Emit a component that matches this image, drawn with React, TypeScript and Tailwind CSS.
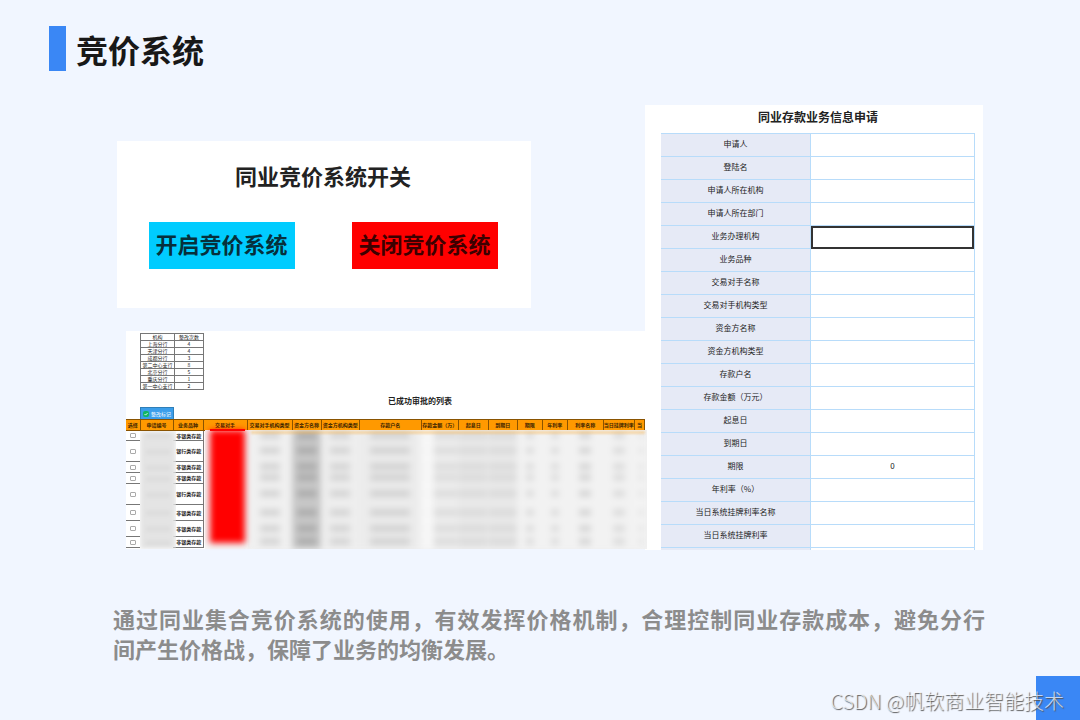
import React from 'react';
import { clsx } from 'clsx';

const branches = [
  { name: '上海分行', count: 4 },
  { name: '天津分行', count: 4 },
  { name: '成都分行', count: 3 },
  { name: '第二中心支行', count: 8 },
  { name: '北京分行', count: 5 },
  { name: '重庆分行', count: 1 },
  { name: '第一中心支行', count: 2 },
];

const columns = [
  { title: '选择', width: 'w-[14px]' },
  { title: '申请编号', width: 'w-[33px]' },
  { title: '业务品种', width: 'w-[30px]' },
  { title: '交易对手', width: 'w-[44px]' },
  { title: '交易对手机构类型', width: 'w-[45px]' },
  { title: '资金方名称', width: 'w-[29px]' },
  { title: '资金方机构类型', width: 'w-[38px]' },
  { title: '存款户名', width: 'w-[62px]' },
  { title: '存款金额（万）', width: 'w-[37px]' },
  { title: '起息日', width: 'w-[30px]' },
  { title: '到期日', width: 'w-[29px]' },
  { title: '期限', width: 'w-[25px]' },
  { title: '年利率', width: 'w-[25px]' },
  { title: '利率名称', width: 'w-[36px]' },
  { title: '当日挂牌利率', width: 'w-[31px]' },
  { title: '当', width: 'w-[10px]' },
];

const deposits = [
  { type: '非银类存款', height: 'h-[10px]' },
  { type: '银行类存款', height: 'h-[21px]' },
  { type: '非银类存款', height: 'h-[11px]' },
  { type: '非银类存款', height: 'h-[11px]' },
  { type: '银行类存款', height: 'h-[21px]' },
  { type: '非银类存款', height: 'h-4' },
  { type: '非银类存款', height: 'h-4' },
  { type: '非银类存款', height: 'h-[11px]' },
];

// masked columns, from 交易对手机构类型 onwards
const masks = [
  { width: 'w-[44px]', bar: 'w-5 bg-[#d4d4d4]', base: 'bg-[#f0f0f0]' },
  { width: 'w-[29px]', bar: 'w-5 bg-[#acacac]', base: 'bg-[#c8c8c8]' },
  { width: 'w-[38px]', bar: 'w-5 bg-[#d4d4d4]', base: 'bg-[#eeeeee]' },
  { width: 'w-[62px]', bar: 'w-10 bg-[#d2d2d2]', base: 'bg-[#ececec]' },
  { width: 'w-[12px]', bar: 'w-1 bg-[#f4f4f4]', base: 'bg-[#f8f8f8]' },
  { width: 'w-[25px]', bar: 'w-6 bg-[#dcdcdc]', base: 'bg-[#ededed]' },
  { width: 'w-[30px]', bar: 'w-7 bg-[#dadada]', base: 'bg-[#e9e9e9]' },
  { width: 'w-[29px]', bar: 'w-7 bg-[#dadada]', base: 'bg-[#e9e9e9]' },
  { width: 'w-[25px]', bar: 'w-2 bg-[#dcdcdc]', base: 'bg-[#f2f2f2]' },
  { width: 'w-[25px]', bar: 'w-2 bg-[#dcdcdc]', base: 'bg-[#f2f2f2]' },
  { width: 'w-[36px]', bar: 'w-3 bg-[#d6d6d6]', base: 'bg-[#f2f2f2]' },
  { width: 'w-[31px]', bar: 'w-3 bg-[#dcdcdc]', base: 'bg-[#f2f2f2]' },
  { width: 'flex-1', bar: 'w-1 bg-[#e2e2e2]', base: 'bg-[#f3f3f3]' },
];

const fields = [
  { label: '申请人' },
  { label: '登陆名' },
  { label: '申请人所在机构' },
  { label: '申请人所在部门' },
  { label: '业务办理机构', active: true },
  { label: '业务品种' },
  { label: '交易对手名称' },
  { label: '交易对手机构类型' },
  { label: '资金方名称' },
  { label: '资金方机构类型' },
  { label: '存款户名' },
  { label: '存款金额（万元）' },
  { label: '起息日' },
  { label: '到期日' },
  { label: '期限', value: '0' },
  { label: '年利率（%）' },
  { label: '当日系统挂牌利率名称' },
  { label: '当日系统挂牌利率' },
];

const SwitchPanel: React.FC = () => (
  <section className="mr-[114px] bg-white pt-[22px] pr-[2px] pb-[39px] text-[22px] leading-6 font-bold text-[#222222]">
    <h2 className="text-center">同业竞价系统开关</h2>
    <div className="mt-[35px] flex justify-center gap-[57px]">
      <button type="button" className="h-[47px] w-[146px] bg-[#00ccff] pb-[5px] text-[#06303c]">
        开启竞价系统
      </button>
      <button type="button" className="h-[47px] w-[146px] bg-[#ff0000] pb-[5px] text-[#3c0000]">
        关闭竞价系统
      </button>
    </div>
  </section>
);

const BranchTable: React.FC = () => (
  <table className="ml-[14px] w-16 table-fixed border-collapse text-center text-[5px] leading-[6px] text-[#222222]">
    <thead>
      <tr className="h-[7px]">
        <th className="w-[34px] border border-[#777777] p-0 font-normal">机构</th>
        <th className="border border-[#777777] p-0 font-normal">整改次数</th>
      </tr>
    </thead>
    <tbody>
      {branches.map((branch) => (
        <tr key={branch.name} className="h-[7px]">
          <td className="border border-[#777777] p-0 whitespace-nowrap">{branch.name}</td>
          <td className="border border-[#777777] p-0">{branch.count}</td>
        </tr>
      ))}
    </tbody>
  </table>
);

const MaskedData: React.FC = () => (
  <>
    {/* 申请编号 */}
    <div className="absolute top-3 bottom-0 left-[14px] w-[36px] overflow-hidden">
      <div className="flex h-full flex-col bg-[#e4e4e4] blur-[2px]">
        {deposits.map((row, i) => (
          <div key={i} className={clsx('flex items-center justify-center', row.height)}>
            <span className="h-1 w-6 bg-[#dadada]" />
          </div>
        ))}
      </div>
    </div>

    <div className="absolute top-[11px] -right-[2px] bottom-0 left-[79px] flex overflow-hidden">
      <div className="w-[43px] bg-[#f4f4f4]" />
      <div className="flex flex-1 bg-[#f0f0f0]">
        <div className="flex flex-1 blur-[3px]">
          {masks.map((mask, i) => (
            <div key={i} className={clsx('flex flex-col items-center', mask.width, mask.base)}>
              {deposits.map((row, j) => (
                <div key={j} className={clsx('flex items-center', row.height)}>
                  <span className={clsx('h-[7px]', mask.bar)} />
                </div>
              ))}
            </div>
          ))}
        </div>
      </div>
    </div>
    <div className="absolute top-3 right-0 left-[125px] h-[3px] bg-[#ff9900]/30 blur-[1px]" />

    {/* 交易对手 */}
    <div className="absolute top-[11px] bottom-[6px] left-[84px] w-[35px] bg-[#ff0000] blur-[3px]" />
    <div className="absolute top-[10px] left-[84px] h-[2px] w-[35px] bg-[#ff0000]" />
  </>
);

const DepositTable: React.FC = () => (
  <div className="relative pb-px">
    <table className="w-full table-fixed border-collapse text-center text-[5px] leading-[6px] text-[#222222]">
      <thead>
        <tr className="h-[11px] bg-[#ff9900]">
          {columns.map((col) => (
            <th
              key={col.title}
              className={clsx(
                'overflow-hidden border border-l-0 border-[#8a5300] p-0 font-bold whitespace-nowrap text-[#3a2300]',
                col.width
              )}
            >
              {col.title}
            </th>
          ))}
        </tr>
      </thead>
      <tbody>
        {deposits.map((row, i) => (
          <tr key={i} className={row.height}>
            <td className="border-b border-[#777777] p-0">
              <input
                type="checkbox"
                aria-label={row.type}
                className="mx-auto block h-[5px] w-[6px] appearance-none rounded-[1px] border border-[#aaaaaa] bg-white"
              />
            </td>
            <td className="p-0" />
            <td className="border-r border-b border-[#777777] p-0 pl-[2px] font-bold whitespace-nowrap">{row.type}</td>
            <td className="p-0" colSpan={13} />
          </tr>
        ))}
      </tbody>
    </table>
    <MaskedData />
  </div>
);

const ApprovedSheet: React.FC = () => (
  <section className="ml-[9px] bg-white pt-[2px]">
    <BranchTable />
    <h2 className="mt-[5px] ml-[69px] text-center text-[8px] leading-3 font-bold text-[#222222]">
      已成功审批的列表
    </h2>
    <button
      type="button"
      className="ml-[14px] flex h-3 w-[34px] items-center justify-center gap-[2px] border border-b-0 border-[#2f7fb8] bg-[#3b9eea] text-[5px] leading-[6px] text-white"
    >
      <svg viewBox="0 0 6 6" className="size-[6px]">
        <rect width="6" height="6" rx="2" fill="#12b565" />
        <path d="M1.5 3l1.1 1.1L4.6 2" fill="none" stroke="#fff" strokeWidth="0.8" />
      </svg>
      整改标记
    </button>
    <DepositTable />
  </section>
);

const ApplicationForm: React.FC = () => (
  <form className="bg-white pr-[8px] pl-4 text-[#222222]">
    <h2 className="pt-1 pb-2 text-center text-xs leading-4 font-bold">同业存款业务信息申请</h2>
    <div className="border-t border-r border-[#b8dcfa]">
      {fields.map((field, i) => (
        <div key={field.label} className="flex h-[23px]">
          <label
            htmlFor={`field-${i}`}
            className="flex w-[150px] items-center justify-center border-r border-b border-[#b8dcfa] bg-[#e6eaf6] pb-[2px] text-[8px]"
          >
            {field.label}
          </label>
          <input
            id={`field-${i}`}
            type="text"
            defaultValue={field.value}
            className={clsx(
              'min-w-0 flex-1 pb-[2px] text-center text-[8px] outline-none',
              field.active ? 'border-2 border-[#333333]' : 'border-b border-[#b8dcfa]'
            )}
          />
        </div>
      ))}
      <div className="h-[2px] w-[150px] border-r border-[#b8dcfa] bg-[#e6eaf6]" />
    </div>
  </form>
);

export default function App() {
  return (
    <div className="relative flex min-h-screen flex-col bg-[#f1f6ff] pt-[26px] font-['Noto_Sans_CJK_SC',sans-serif]">
      <header className="flex items-center gap-[10px] pl-[49px]">
        <span className="h-[45px] w-[17px] bg-[#3a87f5]" />
        <h1 className="text-[32px] leading-10 font-bold text-[#181818]">竞价系统</h1>
      </header>

      <main className="mt-[34px] pr-[97px] pl-[117px]">
        <div className="flex">
          <div className="relative z-10 min-w-0 flex-1 pt-9">
            <SwitchPanel />
            <div className="mt-[23px]">
              <ApprovedSheet />
            </div>
          </div>
          <div className="w-[338px] shrink-0">
            <ApplicationForm />
          </div>
        </div>
        <p className="-mr-[2px] -ml-1 mt-[53px] text-[22px] leading-[30px] font-bold text-[#8c8c8c]">
          <span className="block [text-align-last:justify]">
            通过同业集合竞价系统的使用，有效发挥价格机制，合理控制同业存款成本，避免分行
          </span>
          间产生价格战，保障了业务的均衡发展。
        </p>
      </main>

      <footer className="mt-auto flex justify-end">
        <span className="absolute right-0 bottom-0 size-11 bg-[#3a87f5]" />
        <p className="relative pr-4 pb-1 text-xl leading-[30px] font-light text-white/70 [text-shadow:1px_1px_1px_#555555]">
          CSDN @帆软商业智能技术
        </p>
      </footer>
    </div>
  );
}
